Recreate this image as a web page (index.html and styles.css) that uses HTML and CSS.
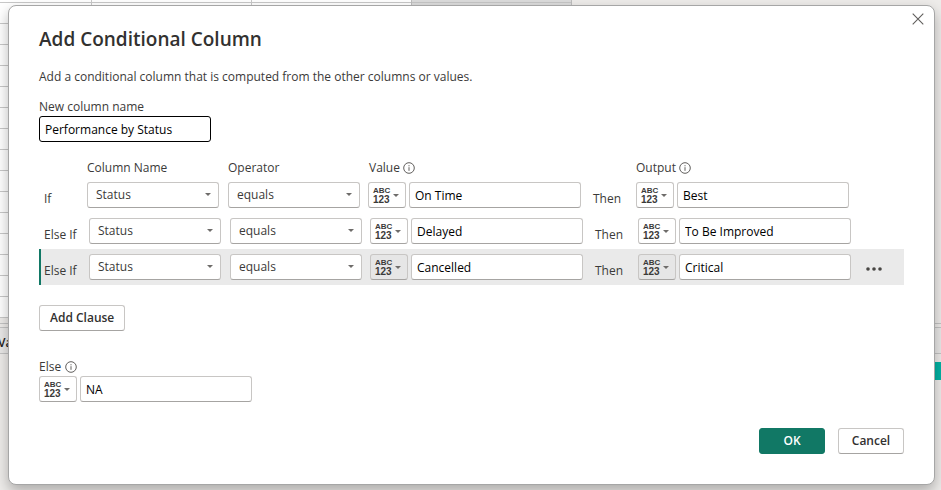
FILE: index.html
```html
<!DOCTYPE html>
<html lang="en">
<head>
<meta charset="utf-8">
<title>Add Conditional Column</title>
<link rel="stylesheet" href="styles.css">
</head>
<body>
<div class="backdrop" aria-hidden="true">
  <div class="sheet"><div class="sheet-selected"></div></div>
  <div class="splitter"></div>
  <div class="panel-head">Va</div>
  <div class="panel-body"><div class="bar"></div></div>
</div>

<form class="dialog" role="dialog" aria-labelledby="title">
  <button type="button" class="close" aria-label="Close">
    <svg width="12" height="12" viewBox="0 0 12 12"><path d="M.7.7l10.6 10.6M11.3.7L.7 11.3" fill="none" stroke="#605e5c" stroke-width="1.1"/></svg>
  </button>
  <h1 class="title" id="title">Add Conditional Column</h1>
  <p class="intro">Add a conditional column that is computed from the other columns or values.</p>

  <label class="caption" for="name">New column name</label>
  <input class="field field-name" id="name" type="text" value="Performance by Status">

  <div class="clauses">
    <div class="clause clause-head">
      <span class="head-column">Column Name</span>
      <span class="head-operator">Operator</span>
      <span class="head-value">Value <svg class="info" viewBox="0 0 12 12"><circle cx="6" cy="6" r="5.3"/><path d="M6 5.2v3.6M6 3.2v1.1"/></svg></span>
      <span class="head-output">Output <svg class="info" viewBox="0 0 12 12"><circle cx="6" cy="6" r="5.3"/><path d="M6 5.2v3.6M6 3.2v1.1"/></svg></span>
    </div>

    <div class="clause">
      <span class="word">If</span>
      <span class="pick"><select aria-label="Column name"><option>Status</option></select></span>
      <span class="pick pick-operator"><select aria-label="Operator"><option>equals</option></select></span>
      <button type="button" class="type" aria-label="Value type"><span class="type-text"><span class="abc">ABC</span><span class="num">123</span></span></button>
      <input class="field" type="text" aria-label="Value" value="On Time">
      <span class="word word-then">Then</span>
      <button type="button" class="type" aria-label="Output type"><span class="type-text"><span class="abc">ABC</span><span class="num">123</span></span></button>
      <input class="field" type="text" aria-label="Output" value="Best">
    </div>

    <div class="clause clause-else">
      <span class="word">Else If</span>
      <span class="pick"><select aria-label="Column name"><option>Status</option></select></span>
      <span class="pick pick-operator"><select aria-label="Operator"><option>equals</option></select></span>
      <button type="button" class="type" aria-label="Value type"><span class="type-text"><span class="abc">ABC</span><span class="num">123</span></span></button>
      <input class="field" type="text" aria-label="Value" value="Delayed">
      <span class="word word-then">Then</span>
      <button type="button" class="type" aria-label="Output type"><span class="type-text"><span class="abc">ABC</span><span class="num">123</span></span></button>
      <input class="field" type="text" aria-label="Output" value="To Be Improved">
    </div>

    <div class="clause clause-else clause-active">
      <span class="word">Else If</span>
      <span class="pick"><select aria-label="Column name"><option>Status</option></select></span>
      <span class="pick pick-operator"><select aria-label="Operator"><option>equals</option></select></span>
      <button type="button" class="type" aria-label="Value type"><span class="type-text"><span class="abc">ABC</span><span class="num">123</span></span></button>
      <input class="field" type="text" aria-label="Value" value="Cancelled">
      <span class="word word-then">Then</span>
      <button type="button" class="type" aria-label="Output type"><span class="type-text"><span class="abc">ABC</span><span class="num">123</span></span></button>
      <input class="field" type="text" aria-label="Output" value="Critical">
      <button type="button" class="more" aria-label="More options">
        <svg width="16" height="4" viewBox="0 0 16 4"><circle cx="2" cy="2" r="1.8"/><circle cx="8" cy="2" r="1.8"/><circle cx="14" cy="2" r="1.8"/></svg>
      </button>
    </div>
  </div>

  <button type="button" class="button button-add">Add Clause</button>

  <label class="caption caption-else" for="else">Else <svg class="info" viewBox="0 0 12 12"><circle cx="6" cy="6" r="5.3"/><path d="M6 5.2v3.6M6 3.2v1.1"/></svg></label>
  <div class="else-row">
    <button type="button" class="type" aria-label="Else type"><span class="type-text"><span class="abc">ABC</span><span class="num">123</span></span></button>
    <input class="field" id="else" type="text" value="NA">
  </div>

  <div class="actions">
    <button type="button" class="button button-primary">OK</button>
    <button type="button" class="button">Cancel</button>
  </div>
</form>
</body>
</html>
```
FILE: styles.css
```css
* { box-sizing: border-box; }

body {
  margin: 0;
  min-height: 100vh;
  display: flex;
  padding: 5px 6px 5px 8px;
  overflow: hidden;
  background: #eeecea;
  color: #3b3a39;
  font: 12px/16px "Open Sans", "Noto Sans", sans-serif;
}

/* worksheet behind the dialog */
.backdrop {
  position: absolute;
  inset: 0;
  display: flex;
  flex-direction: column;
  overflow: hidden;
}

.sheet {
  height: 318px;
  width: 572px;
  padding-left: 411px;
  background:
    linear-gradient(#c8c8c8, #c8c8c8) 91px 0 / 1px 100% no-repeat,
    linear-gradient(#c8c8c8, #c8c8c8) 251px 0 / 1px 100% no-repeat,
    repeating-linear-gradient(#fff 0 2px, #c8c8c8 2px 3px, #fff 3px 21px);
}

.sheet-selected {
  height: 100%;
  border: solid #bdbdbd;
  border-width: 0 1px;
  background: repeating-linear-gradient(#dcdcdc 0 2px, #c6c6c6 2px 3px, #dcdcdc 3px 21px);
}

.splitter {
  height: 10px;
  border: solid #c4c4c4;
  border-width: 0 0 1px;
  background: linear-gradient(#c4c4c4, #c4c4c4) 0 5px / 100% 1px no-repeat #eeecea;
}

.panel-head {
  height: 26px;
  border-bottom: 1px solid #c4c4c4;
  background: #eae9e8;
  color: #252423;
  font-weight: 600;
  line-height: 29px;
  text-indent: -2px;
}

.panel-body {
  flex: 1;
  padding-top: 8px;
}

.bar {
  height: 18px;
  width: 20px;
  margin-left: auto;
  background: #02b3a4;
}

/* dialog */
.dialog {
  position: relative;
  flex: 1;
  display: flex;
  flex-direction: column;
  align-items: flex-start;
  padding: 20px 30px 30px;
  border: 1px solid #a6a6a6;
  border-radius: 8px;
  background: #fff;
  box-shadow: 0 6px 14px rgba(0, 0, 0, .28);
}

.close {
  position: absolute;
  top: 7px;
  right: 10px;
  padding: 0;
  border: 0;
  background: none;
  line-height: 0;
}

.title {
  margin: 0;
  color: #323130;
  font-size: 19px;
  font-weight: 600;
  line-height: 26px;
}

.intro {
  margin: 16px 0 13px;
  line-height: 18px;
}

.caption {
  display: flex;
  align-items: center;
  gap: 4px;
  margin-bottom: 1px;
}

.info {
  width: 12px;
  height: 12px;
  fill: none;
  stroke: #605e5c;
  stroke-width: 1;
}

.field,
.pick select,
.type,
.button {
  height: 26px;
  border: 1px solid #c8c6c4;
  border-bottom-color: #a6a4a2;
  border-radius: 3px;
  background: #fff;
  color: #3b3a39;
  font: inherit;
}

.field {
  width: 100%;
  max-width: 172px;
  padding: 1px 5px 0;
  color: #000;
}

.field-name,
.field-name:focus {
  border-color: #000;
  outline: 0;
}

.clauses {
  width: 100%;
  margin-top: 17px;
}

.clause {
  display: grid;
  grid-template-columns:
    43px minmax(80px, 132px) minmax(80px, 141px) 46px minmax(60px, 175px)
    55px 38px minmax(60px, 175px) 1fr;
  align-items: center;
  height: 36px;
  padding-left: 5px;
}

.clause-head {
  height: 18px;
}

.head-column { grid-column: 2; }
.head-operator { grid-column: 3; padding-left: 9px; }

.head-value,
.head-output {
  display: flex;
  align-items: center;
  gap: 3px;
}

.head-value { grid-column: 4 / 6; padding-left: 9px; }
.head-output { grid-column: 7 / 9; }

.clause-else {
  grid-template-columns:
    45px minmax(80px, 132px) minmax(80px, 141px) 46px minmax(60px, 175px)
    55px 38px minmax(60px, 175px) 1fr;
  padding-left: 3px;
  border-left: 2px solid transparent;
}

.clause-active {
  border-left-color: #117865;
  background: #eaeaea;
}

.word { padding-top: 8px; }
.word-then { padding-left: 12px; }

.pick {
  position: relative;
  display: block;
}

.pick-operator { padding-left: 9px; }

.pick select {
  display: block;
  width: 100%;
  padding: 0 8px;
  appearance: none;
}

.pick::after,
.type::after {
  content: "";
  border: solid transparent;
  border-width: 3px 3px 0;
  border-top-color: #6e6c6a;
}

.pick::after {
  position: absolute;
  top: 11px;
  right: 8px;
  pointer-events: none;
}

.type {
  display: flex;
  flex-shrink: 0;
  align-items: center;
  justify-content: space-between;
  width: 38px;
  padding: 0 6px 0 4px;
  justify-self: end;
}

.clause-active .type { background: #e6e6e6; }

.clause .field { justify-self: end; width: calc(100% - 3px); }

.type-text {
  display: flex;
  flex-direction: column;
  align-items: flex-start;
  font-family: "Liberation Sans", Arial, sans-serif;
  font-weight: 700;
  line-height: 9px;
}

.abc { font-size: 8px; }
.num { font-size: 10px; }

.more {
  padding: 0;
  margin: 4px 0 0 15px;
  border: 0;
  background: none;
  line-height: 0;
  justify-self: start;
  fill: #484644;
}

.button {
  min-width: 66px;
  padding: 0 9px;
  color: #323130;
  font-weight: 600;
}

.button-add { margin-top: 20px; padding: 0 10px; }

.caption-else { margin-top: 28px; }

.else-row {
  display: flex;
  width: 100%;
  gap: 3px;
}

.actions {
  display: flex;
  gap: 13px;
  margin-top: auto;
  margin-left: auto;
}

.button-primary {
  border-color: #117865;
  background: #117865;
  color: #fff;
}
```
